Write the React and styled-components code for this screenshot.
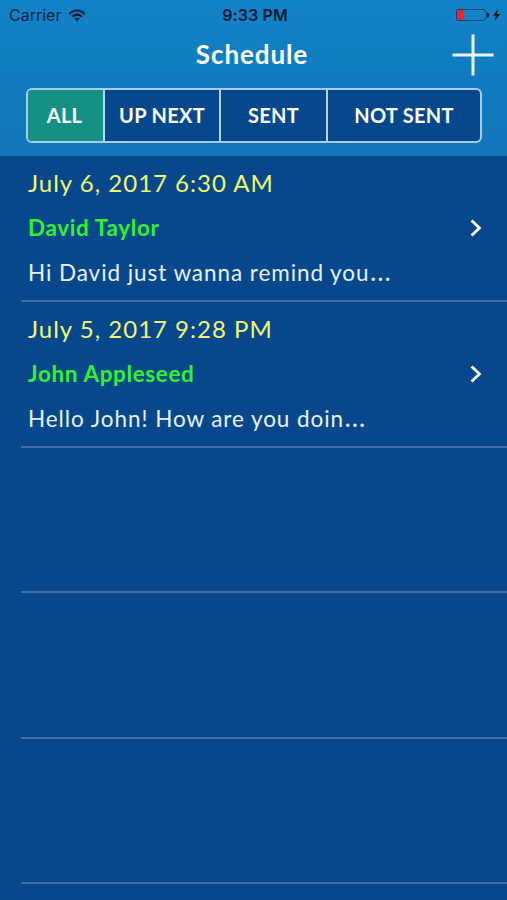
import styled, { createGlobalStyle } from "styled-components"

const tabs = [
    { label: "ALL", width: 75, active: true },
    { label: "UP NEXT", width: 116 },
    { label: "SENT", width: 107 },
    { label: "NOT SENT", width: 154 },
]

const messages = [
    { date: "July 6, 2017 6:30 AM", name: "David Taylor", text: "Hi David just wanna remind you" },
    { date: "July 5, 2017 9:28 PM", name: "John Appleseed", text: "Hello John! How are you doin" },
]

const emptyRows = [1, 2, 3]

const WifiIcon = () => (
    <svg width="18" height="13" viewBox="0 0 18 13" fill="none" stroke="#062440" strokeWidth="2.2">
        <path d="M1.2 5 Q9 -2.4 16.8 5" />
        <path d="M4 7.8 Q9 3.2 14 7.8" />
        <path d="M9 12.4 L6.2 9.6 Q9 7.4 11.8 9.6 Z" fill="#062440" stroke="none" />
    </svg>
)

const BatteryIcon = () => (
    <svg width="46" height="14" viewBox="0 0 46 14">
        <path d="M2.5 1.5 H29 L31.5 4 V10 L29 12.5 H2.5 Q1.5 12.5 1.5 11.5 V2.5 Q1.5 1.5 2.5 1.5 Z" fill="none" stroke="#0a4272" />
        <rect x="2" y="2" width="6" height="10" fill="#fb1f2d" />
        <path d="M32 4.5 Q34.5 5 34.5 7 Q34.5 9 32 9.5 Z" fill="#062440" />
        <path d="M42.8 1 L38 7.7 H41 L39.6 13 L45.2 6 H41.8 Z" fill="#04101f" />
    </svg>
)

const PlusIcon = () => (
    <svg width="42" height="42" viewBox="0 0 42 42" stroke="#eaf6ff" strokeWidth="3">
        <path d="M21 0.5 V41.5 M0.5 21 H41.5" />
    </svg>
)

const ChevronIcon = () => (
    <svg width="12" height="18" viewBox="0 0 12 18" fill="none" stroke="#fff" strokeWidth="2.8">
        <path d="M1.6 1.5 L9.4 9 L1.6 16.5" />
    </svg>
)

const App = () => {
    return (
        <Screen>
            <GlobalStyle />
            <Header>
                <StatusBar>
                    <Carrier>
                        <span>Carrier</span>
                        <WifiIcon />
                    </Carrier>
                    <Time>9:33 PM</Time>
                    <Battery>
                        <BatteryIcon />
                    </Battery>
                </StatusBar>
                <TitleBar>
                    <Title>Schedule</Title>
                    <AddButton aria-label="Add">
                        <PlusIcon />
                    </AddButton>
                </TitleBar>
                <Tabs>
                    {tabs.map((tab) => (
                        <Tab key={tab.label} $width={tab.width} $active={tab.active}>
                            {tab.label}
                        </Tab>
                    ))}
                </Tabs>
            </Header>

            <List>
                {messages.map((message) => (
                    <Row key={message.name}>
                        <Content>
                            <DateText>{message.date}</DateText>
                            <Name>{message.name}</Name>
                            <Message>
                                {message.text}
                                <Ellipsis>…</Ellipsis>
                            </Message>
                        </Content>
                        <ChevronIcon />
                    </Row>
                ))}
                {emptyRows.map((row) => (
                    <Row key={row} />
                ))}
            </List>
        </Screen>
    )
}

export default App

const GlobalStyle = createGlobalStyle`
    * {
        box-sizing: border-box;
    }

    body {
        margin: 0;
        background: #07488c;
    }
`

const Screen = styled.div`
    width: 507px;
    height: 900px;
    overflow: hidden;
    background: #07488c;
    color: white;
    font-family: Lato, "Open Sans", sans-serif;
`

const Header = styled.header`
    height: 156px;
    background: linear-gradient(to bottom, #1283c6, #107bc0 50%, #1177b9);
`

const StatusBar = styled.div`
    display: grid;
    grid-template-columns: 1fr auto 1fr;
    align-items: center;
    height: 30px;
    padding: 0 6px 0 9px;
    color: #062440;
    font-family: Inter, sans-serif;
    font-size: 16px;
`

const Carrier = styled.div`
    display: flex;
    align-items: center;
    gap: 7px;
`

const Time = styled.div`
    color: #041a30;
    font-weight: 600;
    letter-spacing: 0.1px;
`

const Battery = styled.div`
    display: flex;
    justify-content: flex-end;
`

const TitleBar = styled.div`
    display: grid;
    grid-template-columns: 1fr auto 1fr;
    align-items: center;
    height: 50px;
    padding: 0 13px 0 10px;
`

const Title = styled.h1`
    grid-column: 2;
    margin: 0;
    padding-bottom: 2px;
    font-size: 26px;
    font-weight: 700;
    letter-spacing: 0.9px;
    line-height: 48px;
`

const AddButton = styled.button`
    display: flex;
    justify-self: end;
    padding: 0;
    border: none;
    background: none;
    cursor: pointer;
`

const Tabs = styled.nav`
    display: flex;
    width: 456px;
    height: 55px;
    margin: 8px 0 0 26px;
    overflow: hidden;
    border: 2px solid #a5cdee;
    border-radius: 6px;
    background: #07488c;
`

const Tab = styled.div`
    display: flex;
    flex: none;
    width: ${(props) => props.$width}px;
    align-items: center;
    justify-content: center;
    padding: 0 2px 1px 0;
    background: ${(props) => (props.$active ? "#159083" : "transparent")};
    font-size: 20px;
    font-weight: 700;
    letter-spacing: 0.3px;
    white-space: nowrap;
    cursor: pointer;

    & + & {
        padding-right: 0;
        border-left: 2px solid #b5d6f2;
    }
`

const List = styled.main`
    display: flex;
    flex-direction: column;
    padding-top: 0.7px;
`

const Row = styled.div`
    display: flex;
    flex-shrink: 0;
    align-items: center;
    justify-content: space-between;
    height: 145.5px;
    margin-left: 21px;
    padding: 0 25px 0 7px;
    border-bottom: 2px solid #436fa5;
`

const Content = styled.div`
    display: flex;
    flex-direction: column;
    white-space: nowrap;
`

const DateText = styled.div`
    color: #f1f66e;
    font-size: 24px;
    letter-spacing: 1px;
    line-height: 44px;
`

const Name = styled.div`
    color: #2ff32c;
    font-size: 22.5px;
    font-weight: 700;
    letter-spacing: 0.62px;
    line-height: 45px;
`

const Message = styled.div`
    height: 45px;
    color: #e8f2ff;
    font-size: 22.5px;
    letter-spacing: 0.93px;
    line-height: 46px;
`

const Ellipsis = styled.span`
    font-family: "Open Sans", sans-serif;
    font-size: 28px;
    line-height: 1;
`
